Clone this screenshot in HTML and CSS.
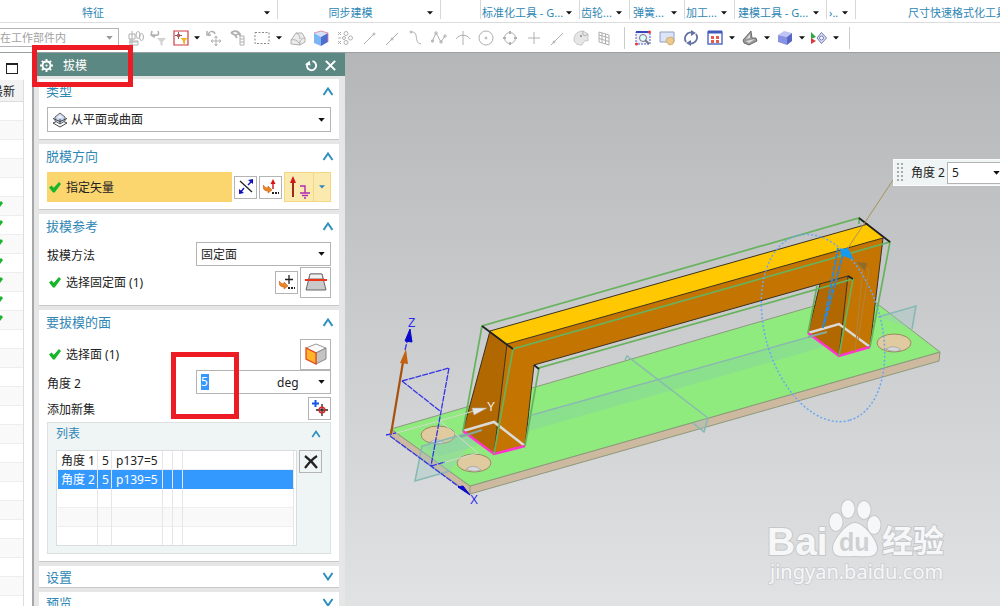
FILE: index.html
```html
<!DOCTYPE html>
<html lang="zh-CN">
<head>
<meta charset="utf-8">
<title>拔模</title>
<link rel="stylesheet" href="styles.css">
</head>
<body>
<svg class="defs" aria-hidden="true">
  <symbol id="arrow" viewBox="0 0 8 5"><path d="M0 0h8L4 4.6z" fill="currentColor"/></symbol>
  <symbol id="up" viewBox="0 0 12 9"><path d="M1.5 8L6 1.5 10.500 8" fill="none" stroke="currentColor" stroke-width="2"/></symbol>
  <symbol id="down" viewBox="0 0 12 9"><path d="M1.500 1L6 7.500 10.500 1" fill="none" stroke="currentColor" stroke-width="2"/></symbol>
  <symbol id="tick" viewBox="0 0 12 12"><path d="M0 6.500L2.500 4.500l2.300 2.300L10 1l2 2-6.300 8.500H4z" fill="#18b52c"/></symbol>
</svg>

<header class="ribbon">
  <button class="tab tab-feature"><span>特征</span><svg class="arr"><use href="#arrow"/></svg></button>
  <button class="tab tab-sync"><span>同步建模</span><svg class="arr"><use href="#arrow"/></svg></button>
  <div class="tab tab-blank"></div>
  <button class="tab tab-std"><span>标准化工具 - G...</span><svg class="arr"><use href="#arrow"/></svg></button>
  <button class="tab tab-gear"><span>齿轮...</span><svg class="arr"><use href="#arrow"/></svg></button>
  <button class="tab tab-spring"><span>弹簧...</span><svg class="arr"><use href="#arrow"/></svg></button>
  <button class="tab tab-gear"><span>加工...</span><svg class="arr"><use href="#arrow"/></svg></button>
  <button class="tab tab-model"><span>建模工具 - G...</span><svg class="arr"><use href="#arrow"/></svg></button>
  <button class="tab tab-more"><span>›..</span><svg class="arr"><use href="#arrow"/></svg></button>
  <button class="tab tab-size"><span>尺寸快速格式化工具</span></button>
</header>

<nav class="toolbar" aria-label="工具条">
  <div class="combo scope">
    <select aria-label="选择范围" disabled><option>在工作部件内</option></select>
    <svg class="arr"><use href="#arrow"/></svg>
  </div>
  <div class="icons icons-a">
    <button aria-label="装配约束"><svg viewBox="0 0 16 16"><path d="M1 4h6v5H1zM2 9v6h8v-4H2M4 1v14M1 12h9" class="g"/><ellipse cx="10" cy="5" rx="2" ry="3.500" class="g"/><ellipse cx="13.500" cy="7" rx="2" ry="3.500" class="g"/></svg></button>
    <button aria-label="重置过滤器"><svg viewBox="0 0 16 16"><path d="M2 1l-1 4 3 2 1-2c4 1 4-2 3-4M2 5h3" class="g" stroke-width="1.500"/><path d="M7 8h9l-3.500 4v4l-2-1v-3z" fill="#d2d2d2"/></svg></button>
    <button aria-label="选择过滤器"><svg viewBox="0 0 16 16"><path d="M1 1h14v14H1z" fill="#fff" stroke="#d23b45" stroke-width="1.200"/><path d="M5.500 2v7M2 5.500h7" stroke="#666"/><circle cx="5.500" cy="5.500" r="1.800" fill="#b55"/><path d="M7.500 8h7L12 11v3.500L10 13v-2z" fill="#f2b52d"/></svg></button>
  </div>
  <button class="drop" aria-label="更多"><svg class="arr"><use href="#arrow"/></svg></button>
  <div class="icons icons-b">
    <button aria-label="移动"><svg viewBox="0 0 16 16"><path d="M3 6c-2-5 5-6 6-2M1 1v4h4" class="g" stroke-width="1.500"/><path d="M10 6v10M5 11h10M8.500 8L10 6l1.500 2M8.500 14l1.500 2 1.500-2M7 9.500L5 11l2 1.500M13 9.500l2 1.500-2 1.500" class="g"/></svg></button>
    <button aria-label="旋转"><svg viewBox="0 0 16 16"><path d="M1 3c3-3 7-2 9 1v2M1 3l4 2 4-1M5 5l2 3" class="g" stroke-width="1.800"/><path d="M10 6h4v9h-4zM10 9h4M10 12h4" class="g"/></svg></button>
    <button aria-label="框选"><svg viewBox="0 0 16 16"><path d="M1 2.500h14v11H1z" class="g g-dark" stroke-dasharray="2 1.500"/></svg></button>
  </div>
  <button class="drop" aria-label="更多"><svg class="arr"><use href="#arrow"/></svg></button>
  <div class="icons icons-c">
    <button aria-label="小平面"><svg viewBox="0 0 16 16"><path d="M1 10l5-7h6l3 5v4l-5 3-9-1z" fill="#ececec"/><path d="M1 10l5-7h6l3 5v4l-5 3-9-1zM1 10c3-1 7 0 9 5M10 15c-1-5 2-7 5-7M6 3c3 1 4 3 4 6" class="g"/></svg></button>
    <button aria-label="着色"><svg viewBox="0 0 16 16"><path d="M1 3l7-2 7 2-7 4z" fill="#d3e2fa"/><path d="M1 3l7 4v9l-7-3z" fill="#79b6f2"/><path d="M8 7l7-4v9l-7 4z" fill="#4d6fd0"/><path d="M1 3l7-2 7 2v9" stroke="#e2788c" fill="none" stroke-width=".8"/></svg></button>
    <button aria-label="捕捉点"><svg viewBox="0 0 16 16"><path d="M1 2l3 3M4 2L1 5M1 11l3 3M4 11l-3 3M1 8h3" class="g"/><circle cx="9" cy="3.500" r="2" class="g"/><circle cx="13.500" cy="8" r="2" class="g"/><circle cx="9" cy="12.500" r="2" class="g"/><circle cx="7" cy="8" r="1.500" class="g"/></svg></button>
    <button aria-label="端点"><svg viewBox="0 0 16 16"><path d="M3 14L13 4" class="g"/><circle cx="13" cy="4" r="1" class="g"/></svg></button>
    <button aria-label="中点"><svg viewBox="0 0 16 16"><path d="M2 15L14 3" class="g"/><circle cx="8" cy="9" r="1" class="g"/></svg></button>
    <button aria-label="控制点"><svg viewBox="0 0 16 16"><path d="M3 2c9-1 2 11 10 12" class="g"/><circle cx="3" cy="2" r="1" class="g"/></svg></button>
    <button aria-label="极点"><svg viewBox="0 0 16 16"><path d="M1 12L5 3l5 9 4-6" class="g"/><circle cx="1.500" cy="11" r="1.200" class="g"/><circle cx="5" cy="3" r="1.200" class="g"/><circle cx="10" cy="12" r="1.200" class="g"/><circle cx="14" cy="6" r="1.200" class="g"/></svg></button>
    <button aria-label="交点"><svg viewBox="0 0 16 16"><path d="M8 1v14M1 9c3-5 11-5 14 0" class="g"/></svg></button>
    <button aria-label="圆心"><svg viewBox="0 0 16 16"><circle cx="8" cy="8" r="7" class="g"/><circle cx="8" cy="8" r="1" class="g"/></svg></button>
    <button aria-label="象限点"><svg viewBox="0 0 16 16"><circle cx="8" cy="8" r="5.500" class="g"/><path d="M8 1v3M8 12v3M1 8h3M12 8h3" class="g" stroke-width="2"/></svg></button>
    <button aria-label="现有点"><svg viewBox="0 0 16 16"><path d="M8 2v12M2 8h12" class="g"/></svg></button>
    <button aria-label="曲线上的点"><svg viewBox="0 0 16 16"><path d="M2 15L14 3" class="g"/><circle cx="5" cy="12" r="1" class="g"/></svg></button>
    <button aria-label="面上的点"><svg viewBox="0 0 16 16"><path d="M1 10c0-6 4-9 9-9l5 3v7c-3-1-5 1-6 4-4 0-7-1-8-5z" fill="#e6e6e6" stroke="#c6c6c6"/><path d="M10 1c-1 5 2 6 5 3" class="g"/><circle cx="8" cy="6" r="1" fill="#888"/></svg></button>
    <button aria-label="栅格点"><svg viewBox="0 0 16 16"><path d="M3 2l10 3v10L3 12zM6 3v10M9.500 4v10M3 5l10 3M3 8.500l10 3" class="g"/></svg></button>
  </div>
  <div class="rule"></div>
  <div class="icons icons-d">
    <button aria-label="缩放区域"><svg viewBox="0 0 16 16"><path d="M1 2h14v12H1z" fill="#eef" stroke="#4563d2" stroke-dasharray="2 1"/><path d="M1 2h13" stroke="#3348bb" stroke-width="2"/><circle cx="8" cy="8" r="3.500" fill="#dff" stroke="#777"/><path d="M10 10l4 4" stroke="#777" stroke-width="2"/><circle cx="14.500" cy="2" r="1.500" fill="#e33"/><circle cx="1.500" cy="14" r="1.500" fill="#e33"/></svg></button>
    <button aria-label="平移"><svg viewBox="0 0 16 16"><path d="M1 2h14v10H1z" fill="#dce5f8" stroke="#8fa0c0"/><path d="M8 8l5-1 2 3-1 4-4 1-3-4z" fill="#edc98c" stroke="#c79c58" stroke-width=".7"/></svg></button>
    <button aria-label="旋转视图"><svg viewBox="0 0 16 16"><path d="M3 12C0 7 4 2 9 2.500M13 4c3 5-1 10-6 9.500" fill="none" stroke="#6674a4" stroke-width="1.800"/><path d="M8 0l5 3-5 3zM8 16l-5-3 5-3z" fill="#6674a4"/></svg></button>
    <button aria-label="适合窗口"><svg viewBox="0 0 16 16"><path d="M1 2h14v12H1z" fill="#fff" stroke="#5570c8" stroke-width="1.500"/><path d="M1 2h14" stroke="#4059bb" stroke-width="3"/><path d="M4 6h3v3H4zM9 6h3v3H9zM4 10h3v3H4zM9 10h3v3H9z" fill="#e55a4c"/></svg></button>
  </div>
  <button class="drop" aria-label="更多"><svg class="arr"><use href="#arrow"/></svg></button>
  <div class="icons icons-e"><button aria-label="剖切"><svg viewBox="0 0 16 16"><path d="M1 10L9 1l1 7h4l1 3-8 4-5-2z" fill="#999" stroke="#555" stroke-width=".8"/><path d="M4 9l4-5v4zM4 11l9-2-6 4z" fill="#ddd"/></svg></button></div>
  <button class="drop" aria-label="更多"><svg class="arr"><use href="#arrow"/></svg></button>
  <div class="icons icons-e"><button aria-label="渲染样式"><svg viewBox="0 0 16 16"><path d="M1 5l6-4 8 2-5 4z" fill="#bfc6f3"/><path d="M1 5l9 2v8l-9-3z" fill="#8793e2"/><path d="M10 7l5-4v8l-5 4z" fill="#5666c3"/></svg></button></div>
  <button class="drop" aria-label="更多"><svg class="arr"><use href="#arrow"/></svg></button>
  <div class="icons icons-f"><button aria-label="视图定向"><svg viewBox="0 0 16 16"><path d="M0 2l5 5-5 2z" fill="#2da844"/><path d="M0 8l5 3-5 3z" fill="#d93a3a"/><path d="M10.500 2.500l5 5.500-5 5.500L6 8z" fill="#dfe4fa" stroke="#6f7ab0"/><circle cx="10.500" cy="8" r="2" fill="#fff" stroke="#6f7ab0"/></svg></button></div>
  <button class="drop" aria-label="更多"><svg class="arr"><use href="#arrow"/></svg></button>
  <div class="rule"></div>
</nav>

<main class="work">
  <aside class="navigator">
    <button class="float" aria-label="浮动"></button>
    <table class="nav-table">
      <thead><tr><th>最新</th></tr></thead>
      <tbody>
        <tr><td></td></tr><tr><td></td></tr><tr><td></td></tr><tr><td></td></tr><tr><td></td></tr>
        <tr><td><svg><use href="#tick"/></svg></td></tr>
        <tr><td><svg><use href="#tick"/></svg></td></tr>
        <tr><td><svg><use href="#tick"/></svg></td></tr>
        <tr><td><svg><use href="#tick"/></svg></td></tr>
        <tr><td><svg><use href="#tick"/></svg></td></tr>
        <tr><td><svg><use href="#tick"/></svg></td></tr>
        <tr><td><svg><use href="#tick"/></svg></td></tr>
        <tr><td></td></tr><tr><td></td></tr><tr><td></td></tr><tr><td></td></tr><tr><td></td></tr>
        <tr><td></td></tr><tr><td></td></tr><tr><td></td></tr><tr><td></td></tr><tr><td></td></tr>
        <tr><td></td></tr><tr><td></td></tr><tr><td></td></tr><tr><td></td></tr><tr><td></td></tr>
      </tbody>
    </table>
  </aside>

  <section class="dialog">
    <div class="title">
      <svg class="gear" viewBox="0 0 14 14"><circle cx="7" cy="7" r="4.300" fill="none" stroke="#fff" stroke-width="2"/><circle cx="7" cy="7" r="1.200" fill="#fff"/><path d="M7 0v2.500M7 11.500V14M0 7h2.500M11.500 7H14M2 2l2 2M10 10l2 2M12 2l-2 2M4 10l-2 2" stroke="#fff" stroke-width="2"/></svg>
      <h1>拔模</h1>
      <button aria-label="重置"><svg viewBox="0 0 14 14"><path d="M2.500 5A5 5 0 1 0 8 2.200" fill="none" stroke="#fff" stroke-width="2"/><path d="M0 6l5-4 1 5z" fill="#fff"/></svg></button>
      <button aria-label="关闭"><svg viewBox="0 0 14 14"><path d="M2 2l10 10M12 2L2 12" stroke="#fff" stroke-width="2.200"/></svg></button>
    </div>
    <div class="groups">
      <section class="group">
        <h2>类型<svg class="chev"><use href="#up"/></svg></h2>
        <div class="combo type">
          <svg class="type-icon" viewBox="0 0 16 16"><path d="M1 11l7-3 7 3-7 4z" fill="#fff" stroke="#444"/><path d="M3 5l5-4 5 4v4l-5 3-5-3z" fill="#c5d5f0" stroke="#666"/><path d="M1 6.500l7 3 7-3M8 6v6" fill="none" stroke="#444"/><path d="M5 5l3-2 3 2-3 2z" fill="#eaf0fb"/></svg>
          <select aria-label="类型"><option>从平面或曲面</option></select>
          <svg class="arr"><use href="#arrow"/></svg>
        </div>
      </section>

      <section class="group">
        <h2>脱模方向<svg class="chev"><use href="#up"/></svg></h2>
        <div class="row">
          <button class="pick active"><svg class="tick"><use href="#tick"/></svg><span>指定矢量</span></button>
          <button class="sq" aria-label="反向"><svg viewBox="0 0 16 16"><path d="M2 2l12 11" stroke="#222" stroke-width="1.300"/><path d="M10 6l4-4M6 9l-4 5" stroke="#1818c8" stroke-width="1.500"/><path d="M15 0v5l-5-4zM1 15v-5l5 4z" fill="#1010b8"/></svg></button>
          <button class="sq" aria-label="矢量对话框"><svg viewBox="0 0 16 16"><path d="M10 10V4" stroke="#c22" stroke-width="1.500"/><path d="M10 0l2.500 5h-5z" fill="#d11"/><path d="M0 6c0 5 2 6 5 6v2l4-3-4-4v2C3 9 2 8 0 6z" fill="#ef8425" stroke="#c4601c" stroke-width=".6"/><path d="M9 13h2v2H9zM12 13h2v2h-2zM15 13h1v2h-1z" fill="#222"/></svg></button>
          <div class="vector">
            <button aria-label="自动判断的矢量"><svg viewBox="0 0 22 24"><path d="M5 22V6" stroke="#9c2a14" stroke-width="2"/><path d="M5 1l3 7H2z" fill="#d01818"/><path d="M12 11h5v7M12 18h10M14 20.500h6M16 23h2" fill="none" stroke="#b02ab4" stroke-width="1.400"/></svg></button>
            <button class="vector-drop" aria-label="矢量类型"><svg class="arr"><use href="#arrow"/></svg></button>
          </div>
        </div>
      </section>

      <section class="group">
        <h2>拔模参考<svg class="chev"><use href="#up"/></svg></h2>
        <div class="row">
          <label for="method">拔模方法</label>
          <div class="combo field">
            <select id="method"><option>固定面</option></select>
            <svg class="arr"><use href="#arrow"/></svg>
          </div>
        </div>
        <div class="row tall">
          <button class="pick"><svg class="tick"><use href="#tick"/></svg><span>选择固定面 (1)</span></button>
          <button class="sq" aria-label="点对话框"><svg viewBox="0 0 16 16"><path d="M10 1v9M6 5.500h8" stroke="#222" stroke-width="1.300"/><path d="M0 7c0 5 2 6 5 6v2l4-3-4-4v2c-2 0-3-1-5-3z" fill="#ef8425" stroke="#c4601c" stroke-width=".6"/><path d="M9 13h2v2H9zM12 13h2v2h-2zM15 13h1v2h-1z" fill="#222"/></svg></button>
          <button class="sq big" aria-label="固定面"><svg viewBox="0 0 22 22"><path d="M5 3h12l4 16H1z" fill="#c9c9c9" stroke="#666"/><path d="M5 3h12l1 5H4z" fill="#f2f2f2" stroke="#777"/><path d="M0 9h22" stroke="#f0341c" stroke-width="2"/></svg></button>
        </div>
      </section>

      <section class="group">
        <h2>要拔模的面<svg class="chev"><use href="#up"/></svg></h2>
        <div class="row tall">
          <button class="pick"><svg class="tick"><use href="#tick"/></svg><span>选择面 (1)</span></button>
          <button class="sq big" aria-label="面"><svg viewBox="0 0 22 22"><path d="M1 5l10-4 10 4-10 5z" fill="#fafafa" stroke="#999"/><path d="M11 10l10-5v11l-10 5z" fill="#c4c4c4" stroke="#888"/><path d="M1 5l10 5v11L1 16z" fill="#ffb52b" stroke="#e5481c" stroke-width="1.300"/></svg></button>
        </div>
        <div class="row">
          <label for="angle">角度 2</label>
          <div class="combo field measure">
            <input id="angle" value="5">
            <select aria-label="单位"><option>deg</option></select>
            <svg class="arr"><use href="#arrow"/></svg>
          </div>
        </div>
        <div class="row add">
          <span>添加新集</span>
          <button class="sq" aria-label="添加新集"><svg viewBox="0 0 16 16"><path d="M3.500 0v7M0 3.500h7" stroke="#1557e8" stroke-width="2"/><path d="M10 4v12M4 10h12" stroke="#222" stroke-width="1.300"/><circle cx="10" cy="10" r="2.800" fill="none" stroke="#d22" stroke-width="1.500"/></svg></button>
        </div>
        <div class="list">
          <h3>列表<svg class="chev small"><use href="#up"/></svg></h3>
          <div class="list-body">
            <table class="sets">
              <colgroup><col class="c1"><col class="c2"><col class="c3"><col class="c4"><col class="c4"><col></colgroup>
              <tbody>
                <tr><td>角度 1</td><td>5</td><td>p137=5</td><td></td><td></td><td></td></tr>
                <tr class="on"><td>角度 2</td><td>5</td><td>p139=5</td><td></td><td></td><td></td></tr>
                <tr><td></td><td></td><td></td><td></td><td></td><td></td></tr>
                <tr class="alt"><td></td><td></td><td></td><td></td><td></td><td></td></tr>
                <tr><td></td><td></td><td></td><td></td><td></td><td></td></tr>
              </tbody>
            </table>
            <button class="sq remove" aria-label="移除"><svg viewBox="0 0 16 16"><path d="M2 2c4 3 9 8 12 12M14 2C9 5 5 10 2 14" fill="none" stroke="#222" stroke-width="2.200"/></svg></button>
          </div>
        </div>
      </section>

      <section class="group closed"><h2>设置<svg class="chev"><use href="#down"/></svg></h2></section>
      <section class="group closed"><h2>预览<svg class="chev"><use href="#down"/></svg></h2></section>
    </div>
  </section>

  <section class="view">
    <svg class="scene" viewBox="345 53 655 553" preserveAspectRatio="xMinYMin slice" role="img" aria-label="拔模预览">
      <g stroke="#8c9a7c" stroke-width="1" stroke-linejoin="round">
        <path d="M391 429L470 486 940 352 939 361 470 494 390 436z" fill="#cdb9a0"/>
        <path d="M391 429L862 292 940 352 470 486z" fill="#90eb7f"/>
        <path d="M470 486v8" fill="none"/>
      </g>
      <path d="M422 446L827 332V346L440 456z" fill="#86d79b" opacity=".55"/>
      <g stroke="#9a8b62">
        <ellipse cx="438" cy="435" rx="17" ry="9" fill="#dfcb9f"/>
        <ellipse cx="474" cy="463" rx="17" ry="9" fill="#dfcb9f"/>
        <ellipse cx="894" cy="343" rx="17" ry="9" fill="#dfcb9f"/>
      </g>
      <g fill="#d8d8dc" stroke="#999" stroke-width=".7">
        <path d="M430 442q7-5 15 1q-8 2-15-1z"/><path d="M466 469q8-6 15 1q-8 3-15-1z"/><path d="M886 349q8-5 15 1q-8 3-15-1z"/>
      </g>
      <g fill="#9fc9bf" fill-opacity=".35" stroke="#86b8b4" stroke-width="1.500">
        <path d="M450 471L415 481 422 446 482 429"/>
        <path d="M878 317L916 306 912 329"/>
        <path d="M693 423L704 432 708 418"/>
        <path d="M625 360L627 356 708 418M532 415L827 332" fill="none" stroke="#8ab9b0"/>
      </g>

      <path d="M490 331L507 344 494 454 463 431z" fill="#b26800"/>
      <path d="M820 284L848 276 839 356 808 333z" fill="#b26800"/>
      <path d="M507 344L883 238 870 347 839 356 848 276 534 365 525 446 494 454z" fill="#c47400"/>
      <path d="M490 331L868 224 883 238 507 344z" fill="#ffc800"/>
      <path d="M490 331L868 224M507 344L883 238 870 347M507 344L494 454M490 331L463 431M848 276L534 365 525 446M820 284L808 333M848 276L839 356" fill="none" stroke="#3b3220"/>
      <g fill="none" stroke="#dadada" stroke-width="2.500">
        <path d="M463 431L494 422 525 446M808 333L839 324 870 347"/>
      </g>
      <path d="M463 431L494 454 525 446M808 333L839 356 870 347" fill="none" stroke="#ff35cf" stroke-width="2.500"/>
      <path d="M463 431L482 326 859 218V224M494 454L513 349 890 242 870 347M525 446L539 368 853 279 839 356M808 333L817 286" fill="none" stroke="#68b25d" stroke-width="1.700"/>
      <path d="M482 326L513 349M859 218L890 242M534 365L539 369M848 276L853 279" stroke="#222" stroke-width="1.800"/>
      <path d="M460 437L482 430M808 337L827 332" stroke="#86a8a0" stroke-width="2"/>

      <path d="M393 434L474 411M431 466L478 453 440 421" fill="none" stroke="#d4d8cc"/>
      <path d="M472 408L487 408 474 415z" fill="#e5e5e5" stroke="#aaa" stroke-width=".6"/>
      <g fill="none" stroke="#3434e8" stroke-width="1.300" stroke-dasharray="6 1">
        <path d="M402 381L449 368 431 466M402 381L440 411M390 436L462 489M405 350L408 338M386 435L396 433M431 466L445 462"/>
      </g>
      <path d="M391 434L403 362" stroke="#a8510f" stroke-width="2.200"/>
      <path d="M406 349L408 364 400 363z" fill="#c4610f"/>
      <path d="M410 329L412 342 405 341zM458 487L470 495 463 486z" fill="#0a0acb" stroke="#0a0acb"/>
      <text class="axis" x="408" y="327">Z</text>
      <text class="axis" x="470" y="504">X</text>
      <text class="axis y" x="487" y="411">Y</text>

      <ellipse cx="823" cy="328" rx="96" ry="58" transform="rotate(74 823 328)" fill="none" stroke="#6aa6f5" stroke-width="1.500" stroke-dasharray="2 2"/>
      <path d="M893 180L848 248" stroke="#aa925a"/>
      <path d="M863 266L855 352M869 270L858 340M862 267L869 270" fill="none" stroke="#b48236" stroke-width="1.200"/>
      <path d="M838 248L823 328M843 254L824 325" stroke="#288be0" stroke-width="1.800" stroke-dasharray="5 1"/>
      <path d="M840 249L848 248 854 260 841 255z" fill="#149bef"/>
      <path d="M856 262L867 263 865 271z" fill="#8e6d2c"/>

      <g class="mark">
        <text class="bai" x="767" y="555">Bai</text>
        <path d="M855 523c9 0 22 18 22 25 0 11-12 8-22 8s-22 3-22-8c0-7 13-25 22-25z"/>
        <ellipse cx="836" cy="522" rx="6.500" ry="9"/><ellipse cx="848" cy="509" rx="6.500" ry="9"/>
        <ellipse cx="864" cy="510" rx="6.500" ry="9"/><ellipse cx="874" cy="525" rx="6.500" ry="9"/>
        <text class="du" x="839" y="551">du</text>
        <text class="jy" x="882" y="552">经验</text>
        <text class="url" x="770" y="579">jingyan.baidu.com</text>
      </g>
    </svg>
    <div class="hud">
      <span class="grip"></span>
      <label for="hud-angle">角度 2</label>
      <div class="combo hud-field">
        <input id="hud-angle" value="5">
        <svg class="arr"><use href="#arrow"/></svg>
      </div>
    </div>
  </section>
</main>
<div class="callout callout-title"></div>
<div class="callout callout-angle"></div>
</body>
</html>
```
FILE: styles.css
```css
* { box-sizing: border-box; }
html, body { height: 100%; }
body {
  margin: 0;
  display: flex;
  flex-direction: column;
  overflow: hidden;
  background: #fff;
  color: #222;
  font: 12px/16px "Noto Sans", "Noto Sans CJK SC", sans-serif;
}
button, input, select {
  font: inherit;
  color: inherit;
  margin: 0;
  padding: 0;
  border: 0;
  background: none;
  appearance: none;
  border-radius: 0;
}
h1, h2, h3 { margin: 0; font-weight: 400; }
svg { display: block; flex: none; }
.defs { position: absolute; width: 0; height: 0; }
.arr { width: 7px; height: 4px; color: #111; }

/* ribbon captions */
.ribbon {
  display: flex;
  flex: none;
  height: 23px;
  border-bottom: 1px solid #dcdcdc;
  color: #2f87b5;
  font-size: 11px;
}
.tab {
  display: flex;
  align-items: center;
  flex: none;
  height: 19px;
  padding: 6px 7px 0 2px;
  border-right: 1px solid #d8d8d8;
  white-space: nowrap;
}
.tab span { flex: 1; overflow: hidden; text-align: left; }
.tab .arr { width: 6px; }
.tab-feature { width: 278px; padding-left: 0; }
.tab-sync { width: 163px; }
.tab-feature span, .tab-sync span { text-align: center; }
.tab-feature span { padding-right: 78px; }
.tab-sync span { padding-right: 6px; }
.tab-blank { width: 40px; }
.tab-std { width: 99px; padding-left: 1px; }
.tab-gear { width: 50px; padding-left: 1px; }
.tab-spring { width: 55px; padding-left: 3px; }
.tab-model { width: 92px; padding-left: 3px; }
.tab-more { width: 29px; }
.tab-size { flex: 1; min-width: 0; border: 0; padding: 6px 0 0 52px; }

/* icon bar */
.toolbar {
  display: flex;
  align-items: center;
  flex: none;
  height: 30px;
  border-bottom: 1px solid #9aa0a2;
}
.combo {
  display: flex;
  align-items: center;
  min-width: 0;
  height: 25px;
  padding: 0 5px 0 4px;
  border: 1px solid #b4b4b4;
  background: #fff;
}
.combo select { flex: 1; min-width: 0; padding-top: 1px; }
.scope { width: 119px; height: 19px; padding-left: 0; border-left: 0; color: #a2a2a2; font-size: 11px; }
.scope select { opacity: 1; }
.scope .arr { color: #999; }
.icons { display: flex; flex: none; }
.icons button { flex: 1; display: flex; justify-content: center; }
.icons svg { width: 16px; height: 16px; }
.icons-a { width: 67px; margin-left: 6px; }
.icons-b { width: 72px; }
.icons-c { width: 330px; margin-left: 2px; }
.icons-d { width: 96px; margin-left: 6px; }
.icons-e { width: 25px; }
.icons-f { width: 24px; }
.g { fill: none; stroke: #b0b0b0; }
.g-dark { stroke: #888; }
.drop { display: flex; justify-content: center; width: 10px; flex: none; }
.drop .arr { width: 6px; }
.rule { width: 1px; height: 22px; margin-left: 8px; background: #ccc; }

/* part navigator */
.work { display: flex; flex: 1; min-height: 0; }
.navigator { width: 34px; flex: none; overflow: hidden; border-right: 2px solid #a5a7ab; background: #fff; }
.float { display: block; width: 12px; height: 11px; margin: 10px 0 6px 6px; border: 1px solid #222; border-top-width: 2px; }
.nav-table { width: 24px; table-layout: fixed; border-collapse: separate; border-spacing: 0; border-right: 1px solid #ddd; }
.nav-table th { height: 22px; padding: 2px 8px 0 0; border-bottom: 1px solid #ddd; background: #f2f2f2; font-weight: 400; direction: rtl; white-space: nowrap; overflow: hidden; }
.nav-table td { height: 19px; padding: 0; border-bottom: 1px solid #eee; }
.nav-table tr:nth-child(even) td { background: #f9f9f9; }
.nav-table tbody svg { width: 12px; height: 12px; margin-left: -9px; }

/* dialog */
.dialog { display: flex; flex-direction: column; width: 311px; flex: none; background: #e6e6e6; overflow: hidden; }
.title { display: flex; align-items: center; gap: 6px; flex: none; height: 23px; padding: 2px 8px 0 6px; background: #5b8882; color: #fff; }
.title h1 { flex: 1; margin-left: 4px; font-size: 12px; line-height: 16px; }
.title svg { width: 13px; height: 13px; }
.groups { display: flex; flex-direction: column; gap: 4px; padding: 3px 6px 0 5px; }
.group { flex: none; padding: 0 8px 7px; border-bottom: 1px solid #c9c9c9; background: #fff; }
.group h2 { display: flex; align-items: center; justify-content: space-between; height: 28px; margin-left: -1px; padding: 0 0 4px; color: #2f87b5; font-size: 13px; line-height: 20px; }
.group.closed { padding-bottom: 0; }
.group.closed h2 { height: 21px; padding: 0; }
.chev { width: 12px; height: 9px; margin-right: -3px; color: #2f8fbe; }
.chev.small { width: 10px; height: 8px; margin-right: -3px; }
.type { gap: 3px; }
.type-icon { width: 16px; height: 16px; }
.row { display: flex; align-items: center; gap: 2px; }
.row label, .row > span { flex: 1; padding-top: 3px; }
.tall { min-height: 32px; }
.pick { display: flex; align-items: center; flex: 1; gap: 5px; height: 30px; padding-left: 2px; }
.pick span { padding-top: 2px; }
.pick.active { background: #fbd66f; }
.tick { width: 12px; height: 12px; }
.sq { display: flex; align-items: center; justify-content: center; flex: none; width: 23px; height: 23px; border: 1px solid #b4b4b4; background: #fff; }
.sq svg { width: 16px; height: 16px; }
.big { width: 31px; height: 31px; }
.big svg { width: 22px; height: 22px; }
.vector { display: flex; height: 30px; width: 47px; border: 1px solid #f5d77f; background: #faeab0; }
.vector button { display: flex; align-items: center; justify-content: center; flex: 1; }
.vector svg { width: 22px; height: 24px; }
.vector .vector-drop { flex: none; width: 17px; border-left: 1px solid #f5d77f; }
.vector .arr { width: 6px; height: 4px; color: #2f87b5; }
.field { width: 135px; height: 24px; }
.field select { padding-top: 2px; }
.measure input { flex: none; width: 8px; height: 16px; background: #3399ff; color: #fff; }
.measure select { margin-left: 68px; }
.add { height: 28px; }
.list { padding: 0 8px 7px; border: 1px solid #dde1e1; background: #eff5f5; }
.list h3 { display: flex; align-items: center; justify-content: space-between; height: 27px; padding: 0 4px 6px 0; color: #2f87b5; font-size: 12px; }
.list-body { display: flex; align-items: flex-start; gap: 2px; }
.sets { flex: 1; min-width: 0; table-layout: fixed; border-collapse: separate; border-spacing: 0; border: 1px solid #d9dddd; background: #fff; padding: 0 2px 0 1px; }
.sets td { height: 19px; padding: 2px 0 0 4px; border-right: 1px solid #e6e6e6; border-bottom: 1px solid #eee; line-height: 16px; white-space: nowrap; }
.sets td:first-child { padding-left: 3px; }
.sets tr:last-child td { height: 18px; border-bottom: 0; }
.sets .on td { background: #3399ff; color: #fff; border-bottom-color: #3399ff; }
.sets .alt td { background: #f9f9f9; }
.c1 { width: 40px; }
.c2 { width: 14px; }
.c3 { width: 51px; }
.c4 { width: 10px; }
.remove { background: #eff5f5; }

/* graphics window */
.view { position: relative; flex: 1; min-width: 0; overflow: hidden; background: linear-gradient(#b5b6b8, #e1e2e4); }
.scene { width: 100%; height: 100%; }
.axis { font: 12px "Liberation Sans", sans-serif; fill: #2a2aee; }
.axis.y { fill: #eee; }
.mark { fill: #f6f7f8; stroke: #c6c7c9; stroke-width: 2; paint-order: stroke; }
.bai { font: bold 39px "Liberation Sans", sans-serif; }
.du { font: bold 25px "Liberation Sans", sans-serif; fill: #cfd0d2; stroke: none; }
.jy { font: bold 31px "Noto Sans CJK SC", sans-serif; }
.url { font: 20px "Noto Sans", sans-serif; stroke: #cfd0d2; }
.hud { position: absolute; top: 106px; right: 0; display: flex; align-items: center; width: 107px; height: 27px; padding-left: 2px; border: 1px solid #fafcfc; border-right: 0; background: #eff5f5; }
.grip { width: 7px; height: 21px; margin-right: 8px; background: radial-gradient(circle, #aaa 1px, transparent 1px) 0 0 / 4px 4px; }
.hud label { flex: 1; white-space: nowrap; }
.hud-field { flex: none; width: 53px; height: 22px; padding-right: 0; border-right: 0; }
.hud-field input { flex: 1; min-width: 0; width: 20px; }

/* highlight boxes */
.callout { position: absolute; border: 5px solid #ed1c24; pointer-events: none; }
.callout-title { left: 32px; top: 45px; width: 101px; height: 42px; }
.callout-angle { left: 171px; top: 352px; width: 68px; height: 67px; }
```
